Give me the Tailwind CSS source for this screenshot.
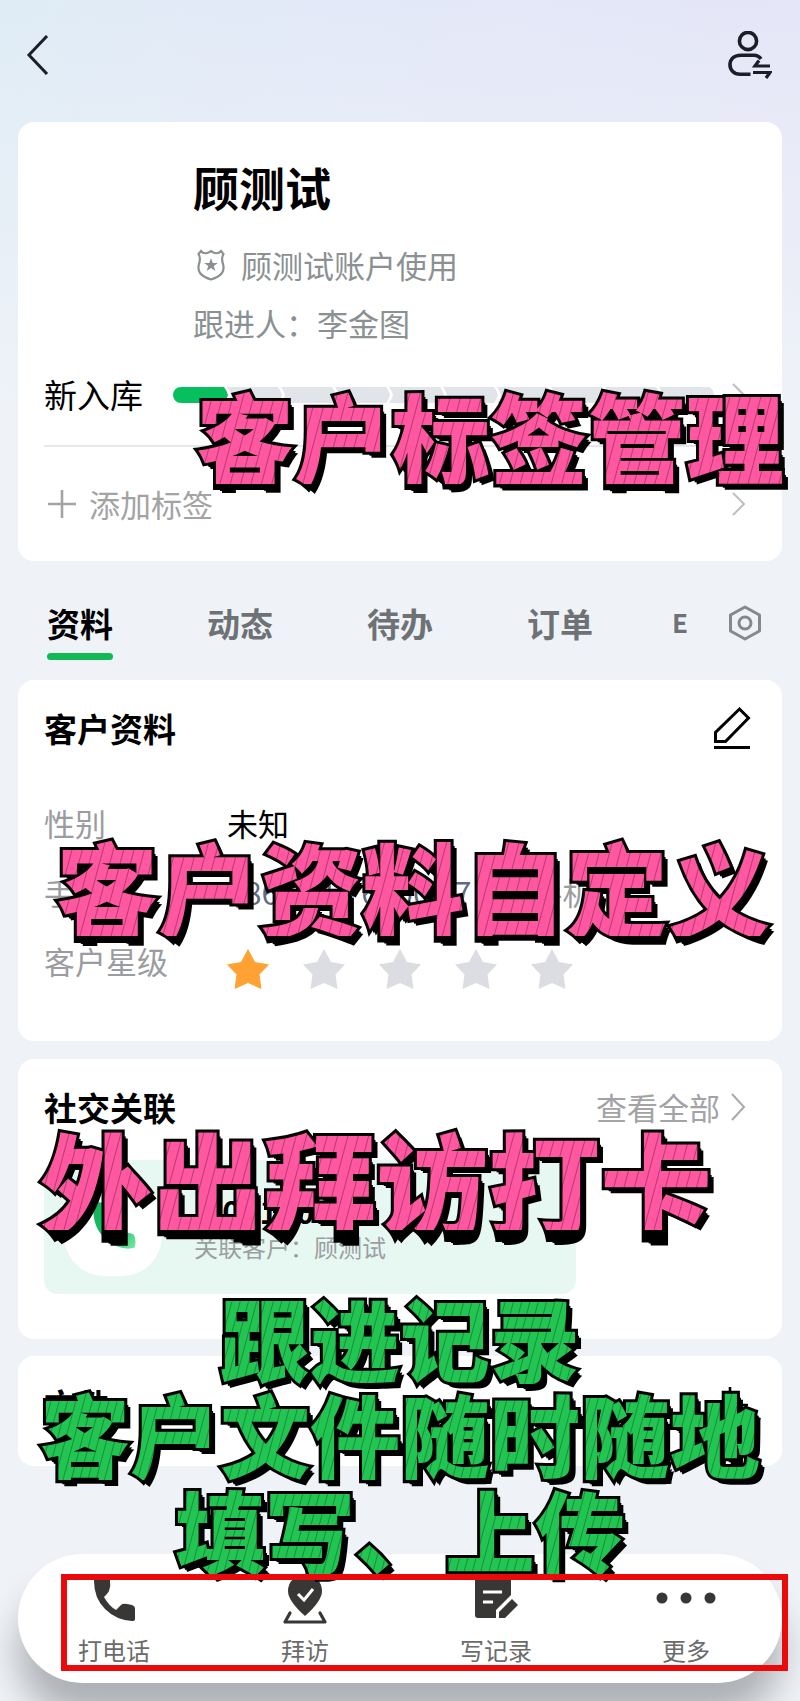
<!DOCTYPE html>
<html lang="zh-CN">
<head>
	<meta charset="UTF-8">
	<meta name="viewport" content="width=device-width, initial-scale=1.0">
	<title>客户详情</title>

	<script src="https://cdn.jsdelivr.net/npm/@tailwindcss/browser@4"></script>
</head>
<body class="bg-[#eff3f8] font-['Noto_Sans_CJK_SC',sans-serif] text-black">
	<div class="relative min-h-screen overflow-hidden flex flex-col px-[18px] bg-[linear-gradient(100deg,#dfecf5_0%,#e3e9f8_30%,#e6e4f7_100%)]">
		<div class="absolute inset-0 bg-linear-to-b from-transparent from-0% to-[#eff3f8] to-25%"></div>

		<header class="relative h-[122px] pb-3 flex justify-between items-center">
			<button type="button" aria-label="返回" class="pl-2">
				<svg class="w-6 h-10" viewBox="0 0 24 40" fill="none" stroke="#1b1d28" stroke-width="3"><path d="M21 1 3 20 21 39"/></svg>
			</button>
			<button type="button" aria-label="更换跟进人" class="pr-[10px]">
				<svg class="w-12 h-12" viewBox="0 0 48 48" fill="none" stroke="#1b1d28" stroke-width="3.6">
					<circle cx="24" cy="10" r="8.6"/>
					<path d="M37 28C35 25 33 24.200 30 24.200H17C9 24.200 6 29 6 34C6 39 10 43.200 16 43.200H26.500"/>
					<path d="M46 35H31L35 29.500M29 41.500H46L42 47" stroke-width="3.200"/>
				</svg>
			</button>
		</header>

		<main class="relative flex flex-col">
			<section class="bg-white rounded-[16px] h-[439px] px-[26px] pt-8">
				<div class="pl-[149px]">
					<h1 class="text-[46px] leading-[64px] font-bold">顾测试</h1>
					<div class="mt-[18px] flex items-center gap-4 text-[31px] leading-[58px] text-[#8b9192]">
						<svg class="ml-1 w-7 h-8" viewBox="0 0 28 32" fill="none" stroke="#8b9192" stroke-width="2.200">
							<path d="M4 2Q6.500 5 10 4Q12.500 3.500 14 2Q15.500 3.500 18 4Q21.500 5 24 2L26.500 5Q24 9 26 15Q27.500 20 25 24Q22 28 14 30.500Q6 28 3 24Q.5 20 2 15Q4 9 1.500 5Z"/>
							<path fill="#8b9192" stroke="none" d="m14 9 1.700 4.900 5.200.1-4.100 3.100 1.500 5-4.300-3-4.300 3 1.500-5-4.100-3.100 5.200-.1z"/>
						</svg>
						<span>顾测试账户使用</span>
					</div>
					<p class="text-[31px] leading-[58px] text-[#8b9192]">跟进人：李金图</p>
				</div>
				<a href="#" class="mt-2 pr-[10px] pb-4 h-[87px] flex items-center text-[33px] border-b-2 border-[#e6e7e9]">
					<span>新入库</span>
					<svg class="ml-[30px] w-[541px] h-4" viewBox="0 0 541 16" preserveAspectRatio="none">
						<path fill="#08bf5e" d="M8 0H51Q54 4 55 8Q54 12 51 16H8A8 8 0 0 1 8 0Z"/>
						<g fill="#e1e4e9">
							<path id="step" d="M54 0H105Q108 4 109 8Q108 12 105 16H54Q57 12 58 8Q57 4 54 0Z"/>
							<use href="#step" x="54"/>
							<use href="#step" x="108"/>
							<use href="#step" x="162"/>
							<use href="#step" x="216"/>
							<use href="#step" x="270"/>
							<use href="#step" x="324"/>
							<use href="#step" x="378"/>
							<path d="M486 0H537Q541 4 541 8Q541 12 537 16H486Q489 12 490 8Q489 4 486 0Z"/>
						</g>
					</svg>
					<svg class="ml-auto w-[14px] h-6" viewBox="0 0 14 24" fill="none" stroke="#bcbec0" stroke-width="2"><path d="m1 1 11 11L1 23"/></svg>
				</a>
				<a href="#" class="pr-[10px] h-[114px] flex items-center text-[31px] text-[#a3a3a3]">
					<svg class="ml-1 mr-[13px] w-7 h-7" viewBox="0 0 28 28" stroke="#a3a3a3" stroke-width="2.600"><path d="M14 0v28M0 14h28"/></svg>
					<span>添加标签</span>
					<svg class="ml-auto w-[14px] h-6" viewBox="0 0 14 24" fill="none" stroke="#bcbec0" stroke-width="2"><path d="m1 1 11 11L1 23"/></svg>
				</a>
			</section>

			<nav class="h-[119px] pt-9 pl-[29px] pr-5 flex items-start text-[33px] leading-[52px] font-bold text-[#6e7275]">
				<div class="flex flex-1 gap-[94px] whitespace-nowrap">
					<a href="#" class="text-black after:block after:mt-1 after:h-[7px] after:rounded-full after:bg-[#14b955]">资料</a>
					<a href="#">动态</a>
					<a href="#">待办</a>
					<a href="#">订单</a>
				</div>
				<a href="#" class="mr-10 text-[26px] leading-[50px]">E</a>
				<button type="button" aria-label="标签页设置" class="mt-2">
					<svg class="w-[34px] h-9" viewBox="0 0 34 36" fill="none" stroke="#85898b" stroke-width="3"><path stroke-linejoin="round" d="m17 2 14.500 8v16L17 34 2.500 26V10z"/><circle cx="17" cy="18" r="6"/></svg>
				</button>
			</nav>

			<section class="bg-white rounded-[16px] h-[361px] px-[26px] pt-[22px]">
				<div class="flex justify-between items-center pr-1">
					<h2 class="text-[33px] leading-[52px] font-bold">客户资料</h2>
					<button type="button" aria-label="编辑">
						<svg class="w-10 h-11" viewBox="0 0 40 44" fill="none" stroke="#000" stroke-width="3"><path d="M2 41.500h36M3.500 35.500v-9L27.500 3l9 9-23 23.500z"/></svg>
					</button>
				</div>
				<dl class="mt-[34px] grid grid-cols-[183px_1fr] text-[31px] leading-[69px] text-[#9b9c9f]">
					<dt>性别</dt>
					<dd class="text-black">未知</dd>
					<dt>手机</dt>
					<dd class="text-[#5d6b80]">186 0013 6000 57<span class="ml-[60px] text-[#9b9c9f]">手机</span></dd>
					<dt>客户星级</dt>
					<dd class="pt-4 flex items-center gap-[34px] text-[#dcdce3]">
						<svg class="w-[42px] h-10 text-[#ffa133]" viewBox="0 0 42 40" fill="currentColor"><path id="star" d="M21 0 28 13 42 15.500 32.500 25.500 34.500 40 21 34 7.500 40 9.500 25.500 0 15.500 14 13Z"/></svg>
						<svg class="w-[42px] h-10" viewBox="0 0 42 40" fill="currentColor"><use href="#star"/></svg>
						<svg class="w-[42px] h-10" viewBox="0 0 42 40" fill="currentColor"><use href="#star"/></svg>
						<svg class="w-[42px] h-10" viewBox="0 0 42 40" fill="currentColor"><use href="#star"/></svg>
						<svg class="w-[42px] h-10" viewBox="0 0 42 40" fill="currentColor"><use href="#star"/></svg>
					</dd>
				</dl>
			</section>

			<section class="mt-[18px] bg-white rounded-[16px] h-[280px] px-[26px] pt-[22px]">
				<div class="flex justify-between items-center pr-[10px]">
					<h2 class="text-[33px] leading-[52px] font-bold">社交关联</h2>
					<a href="#" class="flex items-center gap-[10px] text-[31px] text-[#a3a3a6]">查看全部
						<svg class="w-[16px] h-7" viewBox="0 0 16 28" fill="none" stroke="#a8aaac" stroke-width="2"><path d="m2 1 12 13L2 27"/></svg>
					</a>
				</div>
				<a href="#" class="mt-[27px] w-[532px] h-[134px] px-5 flex items-center gap-8 rounded-[14px] bg-[#e7f7f2]">
					<span class="w-[98px] h-[98px] rounded-[40px] bg-white flex justify-center items-center">
						<svg class="w-[52px] h-[52px]" viewBox="0 0 48 48">
							<defs><linearGradient id="call" x1="0" y1="0" x2="1" y2="1"><stop offset="0" stop-color="#12b457"/><stop offset=".6" stop-color="#19c064"/><stop offset="1" stop-color="#7be9a8"/></linearGradient></defs>
							<path fill="url(#call)" d="M6 3Q13-1 17 4Q20 10 17 17Q16 21 21 26Q26 32 31 30Q39 28 43 31Q46 35 44 43Q35 46 24 40Q4 29 6 3Z"/>
						</svg>
					</span>
					<span>
						<span class="block text-[31px] leading-10 font-bold">8.0) 1107</span>
						<span class="block text-2xl leading-8 text-[#9a9fa0]">关联客户：顾测试</span>
					</span>
				</a>
			</section>

			<section class="mt-[17px] bg-white rounded-[16px] h-[110px] px-[26px] pb-3 flex justify-between items-center">
				<h2 class="text-[33px] font-bold">文件</h2>
				<button type="button" aria-label="添加文件" class="pr-2">
					<svg class="w-9 h-9" viewBox="0 0 36 36" stroke="#000" stroke-width="2.600"><path d="M18 0v36M0 18h36"/></svg>
				</button>
			</section>
		</main>

		<footer class="relative mt-[88px] mb-[18px] h-[129px] px-7 grid grid-cols-4 rounded-full bg-white shadow-[0_34px_36px_0_rgba(0,0,0,0.28)] text-2xl leading-9 text-[#6b6b6b]">
			<button type="button" class="w-[136px] pt-[18px] flex flex-col items-center gap-2">
				<svg class="w-[50px] h-[52px]" viewBox="0 0 50 52" fill="#383735"><path d="M8 5H18Q21 5 21 9Q22 14 20 19Q19 21 15 25Q20 34 27 38L32 33Q34 31 38 32L43 33Q46 34 46 37V47Q46 49 43 49Q27 48 16 37Q5 26 5 9Q5 5 8 5Z"/></svg>
				打电话
			</button>
			<button type="button" class="w-[164px] pt-[18px] flex flex-col items-center gap-2">
				<svg class="w-[50px] h-[52px]" viewBox="0 0 50 52" fill="#383735">
					<path d="M25 2A17 17 0 0 1 42 19Q42 29 25 44Q8 29 8 19A17 17 0 0 1 25 2Z"/>
					<path fill="none" stroke="#fff" stroke-width="3" d="m18 22 6 6 9-11"/>
					<path fill="none" stroke="#383735" stroke-width="3.200" stroke-linecap="round" stroke-linejoin="round" d="m10 41-5 9h40l-5-9"/>
				</svg>
				拜访
			</button>
			<button type="button" class="w-[192px] pt-[18px] flex flex-col items-center gap-2">
				<svg class="w-[50px] h-[52px]" viewBox="0 0 50 52" fill="#383735">
					<path d="M7 4H37Q40 4 40 7V23L25 38V46H7Q4 46 4 43V7Q4 4 7 4Z"/>
					<path stroke="#fff" stroke-width="3" d="M12 20h19M12 30h10"/>
					<path d="M28 40 41 27 47 33 34 46H28Z"/>
				</svg>
				写记录
			</button>
			<button type="button" class="w-[218px] pt-[18px] flex flex-col items-center gap-2">
				<svg class="w-[60px] h-[52px]" viewBox="0 0 60 52" fill="#383735"><circle cx="6" cy="26" r="5.500"/><circle cx="30" cy="26" r="5.500"/><circle cx="54" cy="26" r="5.500"/></svg>
				更多
			</button>
		</footer>

		<!-- captions laid over the screen -->
		<div class="absolute inset-0 pointer-events-none font-black whitespace-nowrap">
			<p data-text="客户标签管理" class="absolute left-[196px] top-[384px] text-[98px] leading-[100px] text-black [-webkit-text-stroke:6px_#000] [text-shadow:2px_2px_#000,4px_4px_#000,6px_6px_#000] after:absolute after:inset-0 after:content-[attr(data-text)] after:text-transparent after:bg-clip-text after:[text-shadow:none] after:[-webkit-text-stroke:0] after:bg-[repeating-linear-gradient(105deg,#ff57a0_0px,#ff57a0_8px,#b83a74_9px,#ff57a0_10px)]">客户标签管理</p>
			<p data-text="客户资料自定义" class="absolute left-[56px] top-[836px] text-[102px] leading-[100px] text-black [-webkit-text-stroke:6px_#000] [text-shadow:2px_2px_#000,4px_4px_#000,6px_6px_#000] after:absolute after:inset-0 after:content-[attr(data-text)] after:text-transparent after:bg-clip-text after:[text-shadow:none] after:[-webkit-text-stroke:0] after:bg-[repeating-linear-gradient(105deg,#ff57a0_0px,#ff57a0_8px,#b83a74_9px,#ff57a0_10px)]">客户资料自定义</p>
			<p data-text="外出拜访打卡" class="absolute left-[40px] top-[1130px] text-[112px] leading-[100px] text-black [-webkit-text-stroke:6px_#000] [text-shadow:2px_2px_#000,4px_4px_#000,6px_6px_#000] after:absolute after:inset-0 after:content-[attr(data-text)] after:text-transparent after:bg-clip-text after:[text-shadow:none] after:[-webkit-text-stroke:0] after:bg-[repeating-linear-gradient(105deg,#ff57a0_0px,#ff57a0_8px,#b83a74_9px,#ff57a0_10px)]">外出拜访打卡</p>
			<div class="absolute inset-x-0 top-[1288px] flex flex-col items-center text-[90px] leading-[96px]">
				<p data-text="跟进记录" class="relative text-black [-webkit-text-stroke:6px_#000] [text-shadow:2px_2px_#000,4px_4px_#000,6px_6px_#000] after:absolute after:inset-0 after:content-[attr(data-text)] after:text-transparent after:bg-clip-text after:[text-shadow:none] after:[-webkit-text-stroke:0] after:bg-[repeating-linear-gradient(105deg,#22c552_0px,#22c552_6px,#188f3c_7px,#22c552_8px)]">跟进记录</p>
				<p data-text="客户文件随时随地" class="relative text-black [-webkit-text-stroke:6px_#000] [text-shadow:2px_2px_#000,4px_4px_#000,6px_6px_#000] after:absolute after:inset-0 after:content-[attr(data-text)] after:text-transparent after:bg-clip-text after:[text-shadow:none] after:[-webkit-text-stroke:0] after:bg-[repeating-linear-gradient(105deg,#22c552_0px,#22c552_6px,#188f3c_7px,#22c552_8px)]">客户文件随时随地</p>
				<p data-text="填写、上传" class="relative text-black [-webkit-text-stroke:6px_#000] [text-shadow:2px_2px_#000,4px_4px_#000,6px_6px_#000] after:absolute after:inset-0 after:content-[attr(data-text)] after:text-transparent after:bg-clip-text after:[text-shadow:none] after:[-webkit-text-stroke:0] after:bg-[repeating-linear-gradient(105deg,#22c552_0px,#22c552_6px,#188f3c_7px,#22c552_8px)]">填写、上传</p>
			</div>
			<div class="absolute left-[61px] right-3 bottom-[30px] h-[97px] border-[6px] border-[#ea0a0c]"></div>
		</div>
	</div>
</body>
</html>
